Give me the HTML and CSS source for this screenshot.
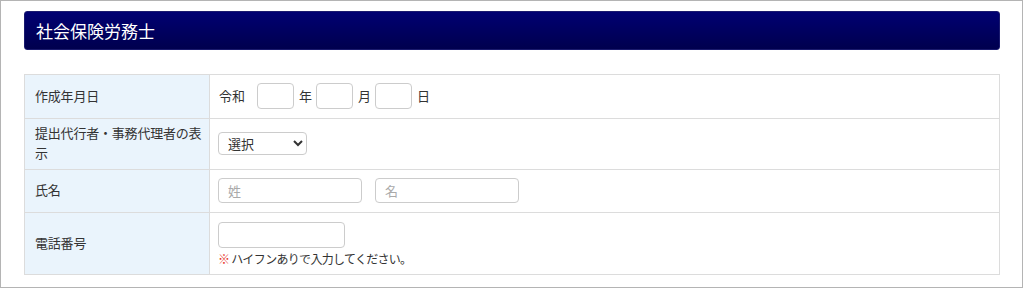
FILE: index.html
```html
<!DOCTYPE html>
<html lang="ja">
<head>
    <meta charset="UTF-8">
    <meta name="viewport" content="width=device-width, initial-scale=1.0">
    <title>社会保険労務士</title>
    <link rel="stylesheet" href="styles.css">
</head>
<body>
    <div class="frame">
        <h2 class="section-title">社会保険労務士</h2>

        <table class="form-table">
            <tr class="row-date">
                <th>作成年月日</th>
                <td>
                    <div class="date-line">
                        <span class="era">令和</span>
                        <input type="text" class="num">
                        <span>年</span>
                        <input type="text" class="num">
                        <span>月</span>
                        <input type="text" class="num">
                        <span>日</span>
                    </div>
                </td>
            </tr>
            <tr class="row-agent">
                <th>提出代行者・事務代理者の表示</th>
                <td>
                    <select class="pick">
                        <option>選択</option>
                    </select>
                </td>
            </tr>
            <tr class="row-name">
                <th>氏名</th>
                <td>
                    <div class="name-line">
                        <input type="text" class="name" placeholder="姓">
                        <input type="text" class="name" placeholder="名">
                    </div>
                </td>
            </tr>
            <tr class="row-tel">
                <th>電話番号</th>
                <td>
                    <input type="text" class="tel">
                    <p class="note"><span class="mark">※</span>ハイフンありで入力してください。</p>
                </td>
            </tr>
        </table>
    </div>
</body>
</html>
```

FILE: styles.css
```css
* { box-sizing: border-box; }
body { margin: 0; font-family: "Noto Sans CJK JP", sans-serif; color: #333; background: #fff; }

.frame { width: 1023px; height: 288px; border: 1px solid #b4b4b4; padding: 10px 22px 0 23px; }

.section-title { margin: 0; height: 39px; padding-left: 11px; line-height: 37px; font-size: 17px; font-weight: normal;
    color: #fff; background: linear-gradient(#000072, #00004e); border-radius: 3px; border: 1px solid #1a1a6e; }

.form-table { width: 100%; margin-top: 24px; border-collapse: collapse; font-size: 13px; border: 1px solid #dcdcdc; }
.form-table th, .form-table td { border: 1px solid #dcdcdc; vertical-align: middle; }
.form-table th { width: 185px; padding: 4px 6px 6px 10px; text-align: left; font-weight: normal;
    line-height: 20px; letter-spacing: -0.2px; background: #eaf4fc; }
.form-table td { padding: 7px 8px 9px; background: #fff; }

input, select { font-family: inherit; font-size: 13px; color: #333; border: 1px solid #ccc; border-radius: 4px;
    background: #fff; margin: 0; }
input::placeholder { color: #aaa; }

.row-date th, .row-date td { height: 44px; }
.date-line { display: flex; align-items: center; gap: 4px; }
.era { margin-left: 1px; margin-right: 8px; }
.num { width: 37px; height: 26px; margin-right: 1px; }

.row-agent th, .row-agent td { height: 51px; }
.pick { width: 89px; height: 23px; padding: 0 4px 0 5px; }

.row-name th, .row-name td { height: 43px; }
.name-line { display: flex; gap: 13px; }
.name { width: 144px; height: 25px; padding: 0 9px; }

.row-tel th, .row-tel td { height: 62px; }
.row-tel td { padding-top: 7px; padding-bottom: 6px; }
.tel { width: 127px; height: 26px; display: block; }
.note { margin: 3px 0 0; font-size: 12px; line-height: 16px; letter-spacing: -0.7px; }
.mark { color: #e8332a; font-weight: bold; margin-right: 2px; }
```
